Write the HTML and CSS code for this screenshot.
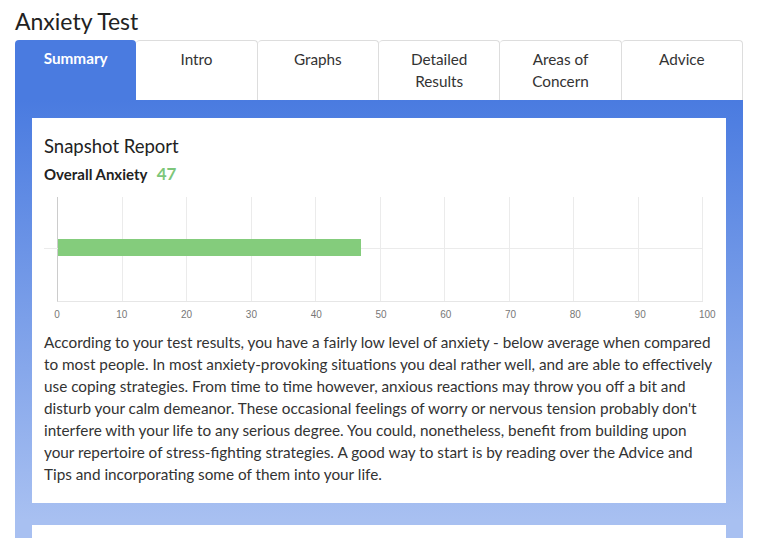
FILE: index.html
```html
<!DOCTYPE html>
<html lang="en">
<head>
  <meta charset="UTF-8">
  <title>Anxiety Test</title>
  <link rel="stylesheet" href="styles.css">
</head>
<body>

  <h1 class="title">Anxiety Test</h1>

  <div class="tabs">
    <div class="tab active">Summary</div>
    <div class="tab">Intro</div>
    <div class="tab">Graphs</div>
    <div class="tab">Detailed<br>Results</div>
    <div class="tab">Areas of<br>Concern</div>
    <div class="tab">Advice</div>
  </div>

  <div class="panel">
    <div class="card">
      <h2>Snapshot Report</h2>
      <p class="score">Overall Anxiety <span class="num">47</span></p>

      <div class="chart">
        <div class="plot">
          <div class="grid">
            <span></span><span></span><span></span><span></span><span></span>
            <span></span><span></span><span></span><span></span><span></span>
          </div>
          <div class="hline"></div>
          <div class="bar" style="width: 47%"></div>
        </div>
        <div class="ticks">
          <span>0</span><span>10</span><span>20</span><span>30</span><span>40</span><span>50</span>
          <span>60</span><span>70</span><span>80</span><span>90</span><span>100</span>
        </div>
      </div>

      <p class="text">According to your test results, you have a fairly low level of anxiety - below average when compared to most people. In most anxiety-provoking situations you deal rather well, and are able to effectively use coping strategies. From time to time however, anxious reactions may throw you off a bit and disturb your calm demeanor. These occasional feelings of worry or nervous tension probably don't interfere with your life to any serious degree. You could, nonetheless, benefit from building upon your repertoire of stress-fighting strategies. A good way to start is by reading over the Advice and Tips and incorporating some of them into your life.</p>
    </div>

    <div class="card next"></div>
  </div>

</body>
</html>
```

FILE: styles.css
```css
* { margin: 0; padding: 0; box-sizing: border-box; }

body {
  font-family: Lato, 'Open Sans', sans-serif;
  color: #333;
  background: white;
  padding: 6px 14px 0 15px;
  overflow: hidden;
  height: 538px;
}

.title {
  font-size: 23px;
  font-weight: 400;
  color: #222;
  line-height: 30px;
  margin-bottom: 4px;
}

.tabs {
  display: grid;
  grid-template-columns: repeat(6, 1fr);
  height: 60px;
}

.tab {
  background: white;
  border: 1px solid #ddd;
  border-bottom: none;
  border-left: none;
  border-radius: 4px 4px 0 0;
  text-align: center;
  font-size: 15.3px;
  line-height: 22px;
  padding-top: 7px;
  color: #333;
}

.tab.active {
  background: #4a7be0;
  color: white;
  font-weight: 700;
  border: none;
}

.panel {
  background: linear-gradient(#4a7be0, #a8c0f1 420px);
  padding: 18px 17px 0 17px;
  height: 438px;
  overflow: hidden;
}

.card {
  background: white;
  padding: 16px 12px 18px 12px;
}

.card.next {
  margin-top: 22px;
  height: 20px;
  padding: 0;
}

.card h2 {
  font-size: 18.5px;
  font-weight: 400;
  color: #222;
  line-height: 24px;
  margin-bottom: 5px;
}

.score {
  font-size: 15px;
  font-weight: 700;
  color: #222;
}

.score .num {
  color: #7dc67a;
  font-size: 17px;
  margin-left: 6px;
}

.chart {
  margin: 13px 0 0 13px;
  width: 660px;
}

.plot {
  position: relative;
  height: 105px;
  width: 646px;
  border-left: 1px solid #ccc;
  border-bottom: 1px solid #e6e6e6;
}

.grid {
  display: flex;
  height: 100%;
}

.grid span {
  flex: 1;
  border-right: 1px solid #ebebeb;
}

.hline {
  position: absolute;
  left: -14px;
  right: 0;
  top: 51px;
  border-top: 1px solid #ebebeb;
}

.bar {
  position: absolute;
  left: 0;
  top: 42px;
  height: 17px;
  background: #84cc7c;
}

.ticks {
  display: flex;
  justify-content: space-between;
  width: 660px;
  margin-left: -6px;
  padding-top: 7px;
  font-family: 'Liberation Sans', Arial, sans-serif;
  font-size: 10px;
  color: #777;
}

.ticks span {
  width: 12px;
  text-align: center;
}

.text {
  margin-top: 11px;
  font-size: 15.3px;
  line-height: 22px;
  color: #333;
}
```
